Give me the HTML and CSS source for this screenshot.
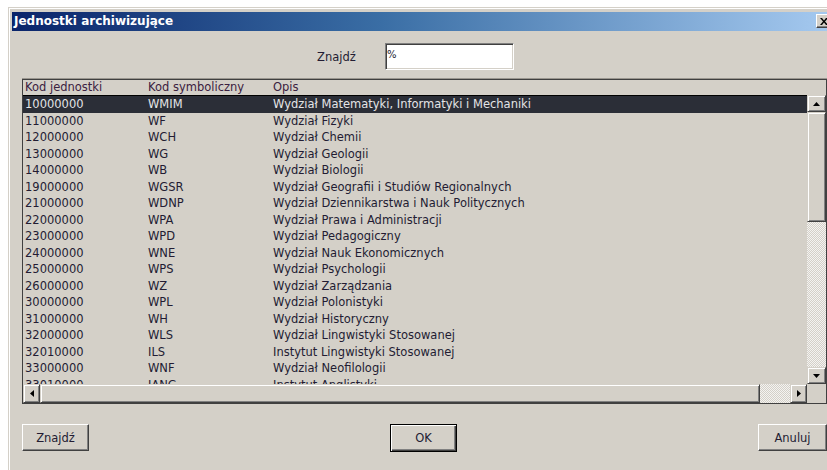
FILE: index.html
```html
<!DOCTYPE html>
<html lang="pl">
<head>
<meta charset="utf-8">
<title>Jednostki archiwizujące</title>
<link rel="stylesheet" href="styles.css">
</head>
<body>
<div class="window">
  <div class="titlebar">
    <span class="title">Jednostki archiwizujące</span>
    <span class="close">
      <svg width="8" height="7" viewBox="0 0 8 7"><path d="M0 0h2l2 2.5 2-2.5h2l-3 3.5 3 3.5h-2l-2-2.5-2 2.5h-2l3-3.5z" fill="#000"/></svg>
    </span>
  </div>
  <div class="content">
    <div class="search">
      <label class="search-label" for="q">Znajdź</label>
      <div class="field" id="q">%</div>
    </div>

    <div class="table">
      <div class="thead">
        <span class="cell">Kod jednostki</span>
        <span class="cell">Kod symboliczny</span>
        <span class="cell">Opis</span>
      </div>
      <div class="tbody">
        <div class="rows">
          <div class="row selected"><span class="cell">10000000</span><span class="cell">WMIM</span><span class="cell">Wydział Matematyki, Informatyki i Mechaniki</span></div>
          <div class="row"><span class="cell">11000000</span><span class="cell">WF</span><span class="cell">Wydział Fizyki</span></div>
          <div class="row"><span class="cell">12000000</span><span class="cell">WCH</span><span class="cell">Wydział Chemii</span></div>
          <div class="row"><span class="cell">13000000</span><span class="cell">WG</span><span class="cell">Wydział Geologii</span></div>
          <div class="row"><span class="cell">14000000</span><span class="cell">WB</span><span class="cell">Wydział Biologii</span></div>
          <div class="row"><span class="cell">19000000</span><span class="cell">WGSR</span><span class="cell">Wydział Geografii i Studiów Regionalnych</span></div>
          <div class="row"><span class="cell">21000000</span><span class="cell">WDNP</span><span class="cell">Wydział Dziennikarstwa i Nauk Politycznych</span></div>
          <div class="row"><span class="cell">22000000</span><span class="cell">WPA</span><span class="cell">Wydział Prawa i Administracji</span></div>
          <div class="row"><span class="cell">23000000</span><span class="cell">WPD</span><span class="cell">Wydział Pedagogiczny</span></div>
          <div class="row"><span class="cell">24000000</span><span class="cell">WNE</span><span class="cell">Wydział Nauk Ekonomicznych</span></div>
          <div class="row"><span class="cell">25000000</span><span class="cell">WPS</span><span class="cell">Wydział Psychologii</span></div>
          <div class="row"><span class="cell">26000000</span><span class="cell">WZ</span><span class="cell">Wydział Zarządzania</span></div>
          <div class="row"><span class="cell">30000000</span><span class="cell">WPL</span><span class="cell">Wydział Polonistyki</span></div>
          <div class="row"><span class="cell">31000000</span><span class="cell">WH</span><span class="cell">Wydział Historyczny</span></div>
          <div class="row"><span class="cell">32000000</span><span class="cell">WLS</span><span class="cell">Wydział Lingwistyki Stosowanej</span></div>
          <div class="row"><span class="cell">32010000</span><span class="cell">ILS</span><span class="cell">Instytut Lingwistyki Stosowanej</span></div>
          <div class="row"><span class="cell">33000000</span><span class="cell">WNF</span><span class="cell">Wydział Neofilologii</span></div>
          <div class="row"><span class="cell">33010000</span><span class="cell">IANG</span><span class="cell">Instytut Anglistyki</span></div>
        </div>
        <div class="vscroll">
          <span class="sb-btn"><svg width="7" height="4" viewBox="0 0 7 4"><path d="M3.5 0L7 4H0z" fill="#000"/></svg></span>
          <span class="sb-thumb v-thumb"></span>
          <span class="sb-track"></span>
          <span class="sb-btn"><svg width="7" height="4" viewBox="0 0 7 4"><path d="M0 0h7L3.5 4z" fill="#000"/></svg></span>
        </div>
      </div>
      <div class="hbar">
        <div class="hscroll">
          <span class="sb-btn"><svg width="4" height="7" viewBox="0 0 4 7"><path d="M4 0v7L0 3.5z" fill="#000"/></svg></span>
          <span class="sb-thumb h-thumb"></span>
          <span class="sb-track h-track"></span>
          <span class="sb-btn"><svg width="4" height="7" viewBox="0 0 4 7"><path d="M0 0l4 3.5L0 7z" fill="#000"/></svg></span>
        </div>
        <span class="corner"></span>
      </div>
    </div>

    <div class="actions">
      <button class="btn">Znajdź</button>
      <button class="btn default">OK</button>
      <button class="btn wide">Anuluj</button>
    </div>
  </div>
</div>
</body>
</html>
```

FILE: styles.css
```css
html, body {
  margin: 0;
  padding: 0;
}

body {
  width: 827px;
  height: 470px;
  overflow: hidden;
  background: #ffffff;
  font-family: "DejaVu Sans", "Liberation Sans", sans-serif;
  font-size: 11.5px;
  color: #231c33;
}

/* dialog frame */
.window {
  box-sizing: border-box;
  width: 830px;
  height: 470px;
  margin: 7px 0 0 8px;
  padding: 5px 4px 0 4px;
  background: #d4d0c8;
  box-shadow: inset 1px 1px #d4d0c8, inset 2px 2px #ffffff;
}

.titlebar {
  display: flex;
  align-items: flex-start;
  height: 19px;
  padding: 0 2px 0 2px;
  background: linear-gradient(to right, #0a246a 0%, #3a6ea5 45%, #a6caf0 100%);
}

.title {
  font-weight: bold;
  font-size: 12px;
  line-height: 19px;
  color: #ffffff;
}

.close {
  margin-left: auto;
  margin-top: 2px;
  box-sizing: border-box;
  width: 16px;
  height: 14px;
  display: flex;
  align-items: center;
  justify-content: center;
  background: #d4d0c8;
  border: 1px solid;
  border-color: #ffffff #404040 #404040 #ffffff;
  box-shadow: inset -1px -1px #808080;
}

.content {
  display: flex;
  flex-direction: column;
  padding: 0 7px 0 10px;
}

/* search line */
.search {
  display: flex;
  align-items: center;
  height: 27px;
  margin-top: 12px;
  padding-left: 295px;
}

.search-label {
  width: 68px;
}

.field {
  box-sizing: border-box;
  width: 129px;
  height: 27px;
  padding: 1px 0 0 1px;
  line-height: 20px;
  background: #ffffff;
  border: 1px solid;
  border-color: #808080 #ffffff #ffffff #808080;
  box-shadow: inset 1px 1px #404040, inset -1px -1px #d4d0c8;
  font-size: 10px;
}

/* list of units */
.table {
  margin-top: 9px;
  border: 1px solid #404040;
  box-shadow: 0 -1px #9a968f;
  background: #d4d0c8;
}

.thead,
.row {
  display: grid;
  grid-template-columns: 123px 125px 1fr;
}

.cell {
  padding-left: 2px;
  white-space: nowrap;
}

.thead {
  height: 15px;
  line-height: 14px;
  border-bottom: 1px solid #000000;
  color: #3b2140;
}

.tbody {
  display: flex;
  height: 288px;
}

.rows {
  flex: 1;
  overflow: hidden;
}

.row {
  height: 16.5px;
  line-height: 16.5px;
}

.row.selected {
  background: #2b2e37;
  color: #e4e4e6;
}

/* scrollbars */
.vscroll {
  display: flex;
  flex-direction: column;
  width: 19px;
  margin-top: -1px;
}

.sb-btn {
  box-sizing: border-box;
  flex: none;
  display: flex;
  align-items: center;
  justify-content: center;
  width: 19px;
  height: 17px;
  background: #d4d0c8;
  border: 1px solid;
  border-color: #d4d0c8 #404040 #404040 #d4d0c8;
  box-shadow: inset 1px 1px #ffffff, inset -1px -1px #808080;
}

.sb-thumb {
  box-sizing: border-box;
  flex: none;
  background: #d4d0c8;
  border: 1px solid;
  border-color: #d4d0c8 #404040 #404040 #d4d0c8;
  box-shadow: inset 1px 1px #ffffff, inset -1px -1px #808080;
}

.v-thumb {
  height: 110px;
}

.sb-track {
  flex: 1;
  background-color: #d4d0c8;
  background-image: repeating-conic-gradient(#f4f3f1 0 25%, #d4d0c8 0 50%);
  background-size: 2px 2px;
}

.hbar {
  display: flex;
  height: 19px;
}

.hscroll {
  flex: 1;
  display: flex;
}

.hscroll .sb-btn {
  width: 17px;
  height: 19px;
}

.h-thumb {
  width: 720px;
  height: 19px;
}

.h-track {
  height: 19px;
}

.corner {
  width: 19px;
  background: #d4d0c8;
}

/* buttons */
.actions {
  display: flex;
  justify-content: space-between;
  align-items: flex-start;
  margin-top: 20px;
}

.btn {
  box-sizing: border-box;
  width: 67px;
  height: 27px;
  padding: 0;
  font: inherit;
  font-size: 11.5px;
  color: #231c33;
  background: #d4d0c8;
  border: 1px solid;
  border-color: #ffffff #404040 #404040 #ffffff;
  box-shadow: inset -1px -1px #808080;
}

.btn.wide {
  width: 69px;
}

.btn.default {
  height: 28px;
  border: 1px solid #000000;
  box-shadow: inset 1px 1px #ffffff, inset -1px -1px #404040, inset -2px -2px #808080;
}
```
